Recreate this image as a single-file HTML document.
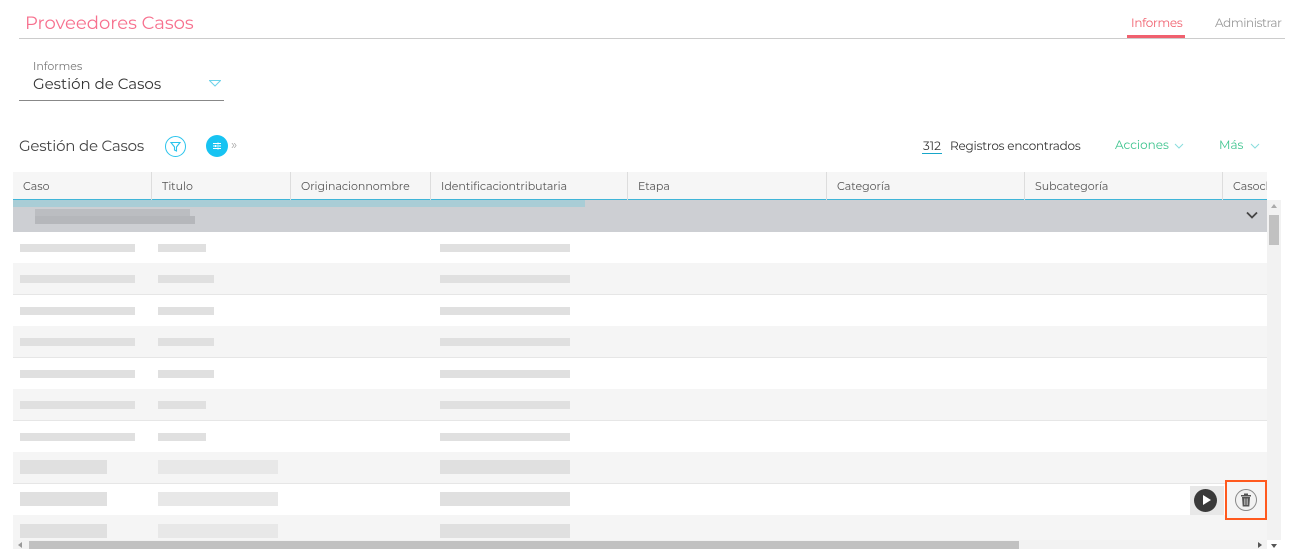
<!DOCTYPE html>
<html><head><meta charset="utf-8"><style>
*{margin:0;padding:0;box-sizing:border-box}
body{width:1293px;height:549px;overflow:hidden;background:#fff;font-family:"Montserrat","Liberation Sans",sans-serif;position:relative;color:#444}
.a{position:absolute}
.row{position:absolute;left:13px;width:1254px;height:32px;border-bottom:1px solid #e6e6e6}
.b{position:absolute;height:8px;background:#e0e0e0}
.th{position:absolute;top:172px;height:28px;font-size:11px;color:#555;line-height:28px;padding-left:10px;border-right:1px solid #ddd}
</style></head><body>
<div class="a" style="left:25px;top:12px;font-size:18px;color:#f7708e">Proveedores Casos</div>
<div class="a" style="left:19px;top:38px;width:1266px;height:1px;background:#ccc"></div>
<div class="a" style="left:1131px;top:16px;font-size:12px;color:#f0606e;letter-spacing:-0.3px">Informes</div>
<div class="a" style="left:1127px;top:35px;width:58px;height:3px;background:#f0606e"></div>
<div class="a" style="left:1215px;top:16px;font-size:12px;color:#999;letter-spacing:-0.4px">Administrar</div>
<div class="a" style="left:33px;top:59px;font-size:11px;color:#777">Informes</div>
<div class="a" style="left:33px;top:74px;font-size:15px;color:#333">Gestión de Casos</div>
<svg class="a" style="left:209px;top:80px" width="12" height="7" viewBox="0 0 12 7"><path d="M0.5 0.5h11L6 6z" fill="none" stroke="#6ed3ea"/></svg>
<div class="a" style="left:19px;top:100px;width:205px;height:1px;background:#888"></div>
<div class="a" style="left:19px;top:136px;font-size:15px;color:#444;letter-spacing:-0.2px">Gestión de Casos</div>
<div class="a" style="left:165px;top:136px;width:21px;height:21px;border:1px solid #2bc4ec;border-radius:50%"></div>
<svg class="a" style="left:169px;top:140px" width="13" height="13" viewBox="0 0 13 13"><path d="M2 2.5h9L7.5 7v4L5.5 10V7z" fill="none" stroke="#2bc4ec" stroke-width="1.1"/></svg>
<div class="a" style="left:206px;top:135px;width:22px;height:22px;background:#17c3f2;border-radius:50%"></div>
<svg class="a" style="left:211px;top:140px" width="12" height="12" viewBox="0 0 12 12"><path d="M2 3.5h8M2 6h8M2 8.5h8" stroke="#fff" stroke-width="1"/><path d="M7 2.5v2M4.5 5v2M7 7.5v2" stroke="#fff" stroke-width="1"/></svg>
<div class="a" style="left:231px;top:137px;font-size:13px;color:#aaa">»</div>
<div class="a" style="left:923px;top:139px;font-size:12px;color:#333">312</div>
<div class="a" style="left:922px;top:153px;width:20px;height:1px;background:#17a6c9"></div>
<div class="a" style="left:950px;top:139px;font-size:12px;color:#333;letter-spacing:-0.2px">Registros encontrados</div>
<div class="a" style="left:1115px;top:138px;font-size:12px;color:#3dc48e">Acciones</div>
<svg class="a" style="left:1174px;top:143px" width="10" height="6"><path d="M1 1l4 4 4-4" fill="none" stroke="#8dd" stroke-width="1"/></svg>
<div class="a" style="left:1219px;top:138px;font-size:12px;color:#3dc48e">Más</div>
<svg class="a" style="left:1250px;top:143px" width="10" height="6"><path d="M1 1l4 4 4-4" fill="none" stroke="#8dd" stroke-width="1"/></svg>
<div class="a" style="left:13px;top:172px;width:1254px;height:28px;background:#f6f6f6;border-bottom:1px solid #3fb5d8"></div>
<div class="th" style="left:13px;width:139px">Caso</div>
<div class="th" style="left:152px;width:139px">Titulo</div>
<div class="th" style="left:291px;width:140px">Originacionnombre</div>
<div class="th" style="left:431px;width:197px">Identificaciontributaria</div>
<div class="th" style="left:628px;width:199px">Etapa</div>
<div class="th" style="left:827px;width:198px">Categoría</div>
<div class="th" style="left:1025px;width:198px">Subcategoría</div>
<div class="th" style="left:1223px;width:44px;overflow:hidden;border:0">Casocla</div>
<div class="a" style="left:13px;top:200px;width:1254px;height:32px;background:#cdcfd3"></div>
<div class="a" style="left:13px;top:200px;width:572px;height:7px;background:#a9cdd6"></div>
<div class="b" style="left:35px;top:209px;width:155px;background:#bbbdc1"></div>
<div class="b" style="left:35px;top:216px;width:160px;background:#b5b7bb"></div>
<svg class="a" style="left:1246px;top:211px" width="12" height="8"><path d="M1 1.5l5 5 5-5" fill="none" stroke="#444" stroke-width="1.8"/></svg>
<div class="row" style="top:232px;background:#fff"></div>
<div class="row" style="top:263px;background:#f5f5f5"></div>
<div class="row" style="top:295px;background:#fff"></div>
<div class="row" style="top:326px;background:#f5f5f5"></div>
<div class="row" style="top:358px;background:#fff"></div>
<div class="row" style="top:389px;background:#f5f5f5"></div>
<div class="row" style="top:421px;background:#fff"></div>
<div class="row" style="top:452px;background:#f5f5f5"></div>
<div class="row" style="top:484px;background:#fff"></div>
<div class="row" style="top:515px;background:#f5f5f5"></div>
<div class="b" style="left:20px;top:244px;width:115px"></div><div class="b" style="left:158px;top:244px;width:48px"></div><div class="b" style="left:440px;top:244px;width:130px"></div>
<div class="b" style="left:20px;top:275px;width:115px"></div><div class="b" style="left:158px;top:275px;width:56px"></div><div class="b" style="left:440px;top:275px;width:130px"></div>
<div class="b" style="left:20px;top:307px;width:115px"></div><div class="b" style="left:158px;top:307px;width:56px"></div><div class="b" style="left:440px;top:307px;width:130px"></div>
<div class="b" style="left:20px;top:338px;width:115px"></div><div class="b" style="left:158px;top:338px;width:56px"></div><div class="b" style="left:440px;top:338px;width:130px"></div>
<div class="b" style="left:20px;top:370px;width:115px"></div><div class="b" style="left:158px;top:370px;width:56px"></div><div class="b" style="left:440px;top:370px;width:130px"></div>
<div class="b" style="left:20px;top:401px;width:115px"></div><div class="b" style="left:158px;top:401px;width:48px"></div><div class="b" style="left:440px;top:401px;width:130px"></div>
<div class="b" style="left:20px;top:433px;width:115px"></div><div class="b" style="left:158px;top:433px;width:48px"></div><div class="b" style="left:440px;top:433px;width:130px"></div>
<div class="b" style="left:20px;top:460px;width:87px;height:14px"></div><div class="b" style="left:158px;top:460px;width:120px;height:14px;background:#e8e8e8"></div><div class="b" style="left:440px;top:460px;width:130px;height:14px"></div>
<div class="b" style="left:20px;top:492px;width:87px;height:14px"></div><div class="b" style="left:158px;top:492px;width:120px;height:14px;background:#e8e8e8"></div><div class="b" style="left:440px;top:492px;width:130px;height:14px"></div>
<div class="b" style="left:20px;top:524px;width:87px;height:14px"></div><div class="b" style="left:158px;top:524px;width:120px;height:14px;background:#e8e8e8"></div><div class="b" style="left:440px;top:524px;width:130px;height:14px"></div>
<div class="a" style="left:1190px;top:486px;width:34px;height:29px;background:#e8e8e8"></div>
<div class="a" style="left:1194px;top:489px;width:23px;height:23px;border-radius:50%;background:#3a3a3a"></div>
<div class="a" style="left:1203px;top:495px;width:0;height:0;border-top:5.5px solid transparent;border-bottom:5.5px solid transparent;border-left:8px solid #fff"></div>
<div class="a" style="left:1225px;top:480px;width:42px;height:40px;border:2px solid #ff5a1f;background:#f5f5f5"></div>
<div class="a" style="left:1235px;top:489px;width:22px;height:22px;border-radius:50%;border:1px solid #888;background:#f2f2f2"></div>
<svg class="a" style="left:1240px;top:493px" width="12" height="14" viewBox="0 0 12 14"><rect x="1" y="2" width="10" height="1.5" fill="#555"/><rect x="4" y="0.5" width="4" height="2" fill="#555"/><path d="M2 4h8l-.7 9.5H2.7z" fill="#555"/><path d="M4.5 5.5v6.5M6 5.5v6.5M7.5 5.5v6.5" stroke="#ddd" stroke-width=".6"/></svg>
<div class="a" style="left:1267px;top:200px;width:14px;height:340px;background:#f2f2f2"></div>
<div class="a" style="left:1269px;top:215px;width:10px;height:30px;background:#c1c1c1"></div>
<div class="a" style="left:1271px;top:204px;width:0;height:0;border-left:3px solid transparent;border-right:3px solid transparent;border-bottom:4px solid #aaa"></div>
<div class="a" style="left:13px;top:540px;width:1254px;height:9px;background:#f2f2f2"></div>
<div class="a" style="left:29px;top:541px;width:990px;height:8px;background:#c1c1c1"></div>
<div class="a" style="left:18px;top:542px;width:0;height:0;border-top:3px solid transparent;border-bottom:3px solid transparent;border-right:4px solid #999"></div>
<div class="a" style="left:1258px;top:542px;width:0;height:0;border-top:3px solid transparent;border-bottom:3px solid transparent;border-left:4px solid #555"></div>
<div class="a" style="left:1271px;top:544px;width:0;height:0;border-left:3px solid transparent;border-right:3px solid transparent;border-top:4px solid #555"></div>
</body></html>
